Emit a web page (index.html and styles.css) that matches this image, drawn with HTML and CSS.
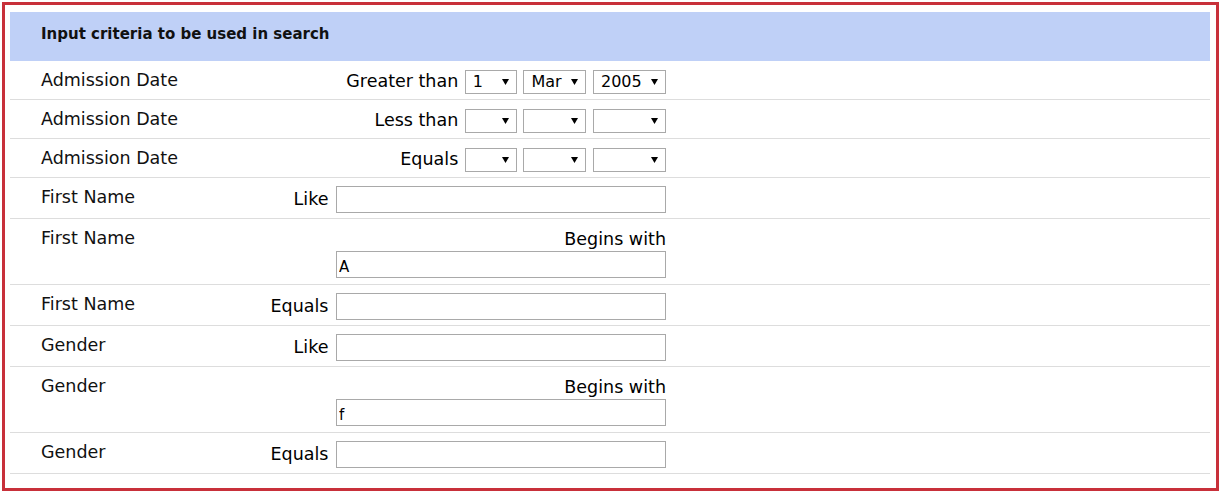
FILE: index.html
```html
<!DOCTYPE html>
<html>
<head>
<meta charset="utf-8">
<link rel="stylesheet" href="styles.css">
</head>
<body>
<div class="frame">
  <div class="head">Input criteria to be used in search</div>

  <div class="row">
    <div class="lbl">Admission Date</div>
    <div class="op">Greater than <span class="sel w1"><span>1</span><svg class="arr" viewBox="0 0 7 6"><path d="M0 0H7L3.5 6Z"/></svg></span> <span class="sel w2"><span>Mar</span><svg class="arr" viewBox="0 0 7 6"><path d="M0 0H7L3.5 6Z"/></svg></span> <span class="sel w3"><span>2005</span><svg class="arr" viewBox="0 0 7 6"><path d="M0 0H7L3.5 6Z"/></svg></span></div>
  </div>

  <div class="row">
    <div class="lbl">Admission Date</div>
    <div class="op">Less than <span class="sel w1"><span></span><svg class="arr" viewBox="0 0 7 6"><path d="M0 0H7L3.5 6Z"/></svg></span> <span class="sel w2"><span></span><svg class="arr" viewBox="0 0 7 6"><path d="M0 0H7L3.5 6Z"/></svg></span> <span class="sel w3"><span></span><svg class="arr" viewBox="0 0 7 6"><path d="M0 0H7L3.5 6Z"/></svg></span></div>
  </div>

  <div class="row">
    <div class="lbl">Admission Date</div>
    <div class="op">Equals <span class="sel w1"><span></span><svg class="arr" viewBox="0 0 7 6"><path d="M0 0H7L3.5 6Z"/></svg></span> <span class="sel w2"><span></span><svg class="arr" viewBox="0 0 7 6"><path d="M0 0H7L3.5 6Z"/></svg></span> <span class="sel w3"><span></span><svg class="arr" viewBox="0 0 7 6"><path d="M0 0H7L3.5 6Z"/></svg></span></div>
  </div>

  <div class="row">
    <div class="lbl">First Name</div>
    <div class="op">Like <input class="txt" type="text" value=""></div>
  </div>

  <div class="row wrap">
    <div class="lbl">First Name</div>
    <div class="op">Begins with <input class="txt" type="text" value="A"></div>
  </div>

  <div class="row">
    <div class="lbl">First Name</div>
    <div class="op">Equals <input class="txt" type="text" value=""></div>
  </div>

  <div class="row">
    <div class="lbl">Gender</div>
    <div class="op">Like <input class="txt" type="text" value=""></div>
  </div>

  <div class="row wrap">
    <div class="lbl">Gender</div>
    <div class="op">Begins with <input class="txt" type="text" value="f"></div>
  </div>

  <div class="row">
    <div class="lbl">Gender</div>
    <div class="op">Equals <input class="txt" type="text" value=""></div>
  </div>
</div>
</body>
</html>
```

FILE: styles.css
```css
html, body {
  margin: 0;
  padding: 0;
  background: #ffffff;
}

body {
  font-family: "DejaVu Sans", Verdana, sans-serif;
  color: #111111;
}

.frame {
  box-sizing: border-box;
  width: 1217px;
  height: 489px;
  margin: 2px;
  border: 3px solid #c8303a;
  padding: 7px 6px 0 5px;
}

.head {
  box-sizing: border-box;
  height: 49px;
  padding: 14px 0 0 31px;
  background: #bfd0f7;
  font-weight: bold;
  font-size: 15px;
  line-height: 16px;
  color: #111111;
}

.row {
  display: flex;
  align-items: flex-start;
  padding: 8px 0 5px;
  border-bottom: 1px solid #dddddd;
}

.row.wrap {
  padding-bottom: 6px;
}

.lbl {
  width: 209px;
  padding-left: 31px;
  font-size: 17.5px;
  line-height: 22px;
}

.op {
  width: 416px;
  text-align: right;
  font-size: 17.5px;
  line-height: 24px;
  color: #000000;
}

.sel {
  box-sizing: border-box;
  display: inline-flex;
  align-items: center;
  justify-content: space-between;
  height: 24px;
  padding: 0 7px 0 7px;
  margin-left: 1px;
  border: 1px solid #a9a9a9;
  background: #ffffff;
  vertical-align: middle;
  font-size: 16px;
  line-height: 22px;
  text-align: left;
  color: #000000;
}

.w1 { width: 52px; }
.w2 { width: 63px; }
.w3 { width: 73px; }

.arr {
  width: 7px;
  height: 6px;
  fill: #000000;
  flex: none;
}

.txt {
  box-sizing: border-box;
  width: 330px;
  height: 27px;
  margin: 0 0 0 2px;
  padding: 4px 2px 0;
  border: 1px solid #a9a9a9;
  font-family: "DejaVu Sans", Verdana, sans-serif;
  font-size: 15px;
  color: #000000;
  vertical-align: middle;
  background: #ffffff;
}
```
